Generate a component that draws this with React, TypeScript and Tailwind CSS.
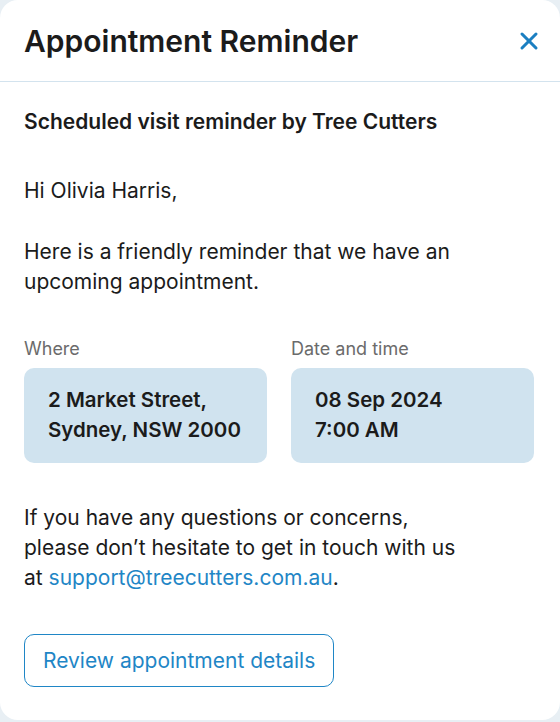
import { X } from "lucide-react";

const details = [
  { label: "Where", lines: ["2 Market Street,", "Sydney, NSW 2000"] },
  { label: "Date and time", lines: ["08 Sep 2024", "7:00 AM"] },
];

export default function App() {
  return (
    <div
      className="min-h-[722px] bg-[#e8eff4] text-[#1b1b1b]"
      style={{ fontFamily: "Inter, 'Noto Sans', sans-serif" }}
    >
      <div className="h-[720px] rounded-[18px] bg-white">
        <header className="flex h-[82px] items-center justify-between border-b border-[#d3e3ee] pl-6 pr-[17px]">
          <h1 className="text-[30px] font-semibold leading-9">
            Appointment Reminder
          </h1>
          <button className="text-[#1b7fc1]">
            <X className="h-7 w-7" strokeWidth={2.6} />
          </button>
        </header>

        <div className="px-6 pt-[26px] text-[21px] leading-[30px]">
          <h2 className="text-[21px] font-semibold leading-7">
            Scheduled visit reminder by Tree Cutters
          </h2>

          <p className="mt-10">Hi Olivia Harris,</p>
          <p className="mt-[31px]">
            Here is a friendly reminder that we have an
            <br />
            upcoming appointment.
          </p>

          <div className="mt-10 grid w-[510px] grid-cols-2 gap-6">
            {details.map((d) => (
              <div key={d.label}>
                <div className="text-[18px] leading-6 text-[#6b6b6b]">
                  {d.label}
                </div>
                <div className="mt-[7px] h-[95px] rounded-[10px] bg-[#d0e3ef] px-6 pt-[17px] text-[20.5px] font-semibold leading-[30px]">
                  {d.lines.map((l) => (
                    <div key={l}>{l}</div>
                  ))}
                </div>
              </div>
            ))}
          </div>

          <p className="mt-10">
            If you have any questions or concerns,
            <br />
            please don’t hesitate to get in touch with us
            <br />
            at{" "}
            <a className="text-[#1f86c6]" href="#">
              support@treecutters.com.au
            </a>
            .
          </p>

          <button className="mt-[41px] h-[53px] rounded-[10px] border border-[#1f86c6] px-[18px] text-[#1f86c6]">
            Review appointment details
          </button>
        </div>
      </div>
    </div>
  );
}
